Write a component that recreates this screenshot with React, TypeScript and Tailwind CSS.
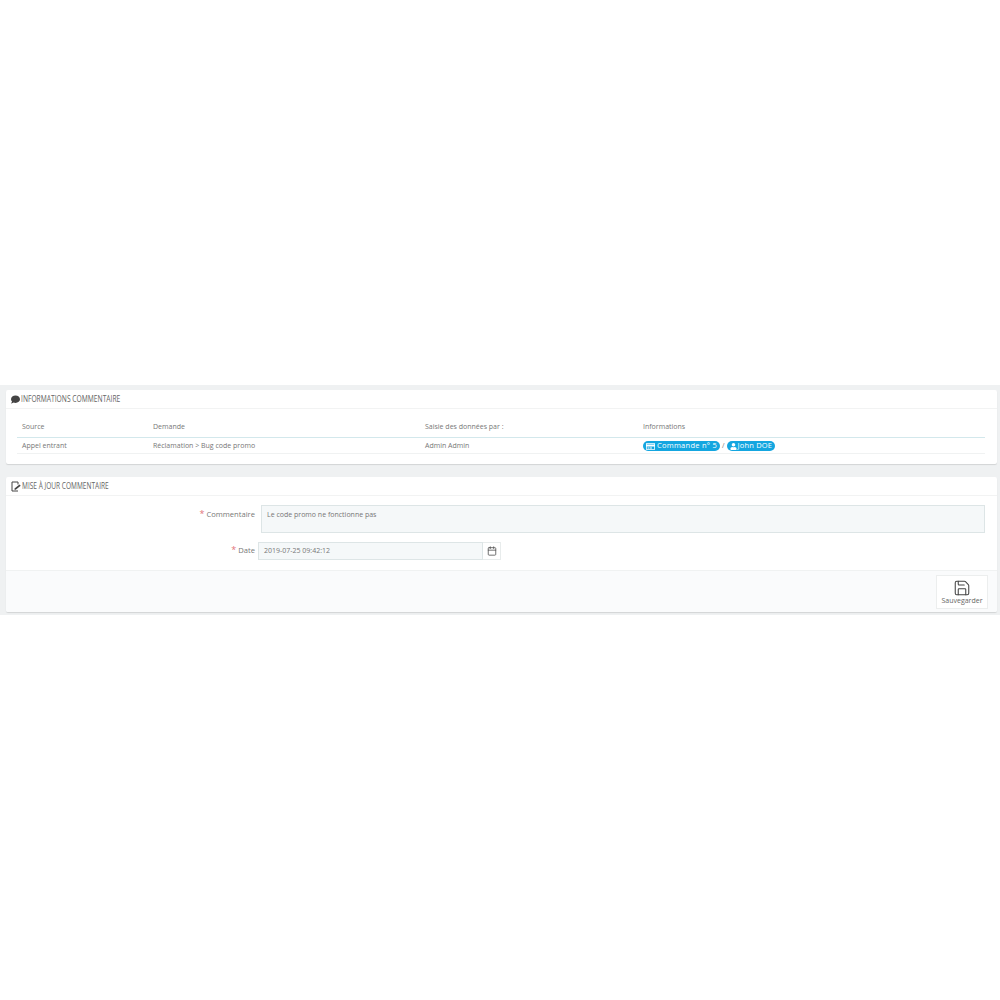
import { Calendar, Save } from "lucide-react";
import { FaComment, FaUser, FaRegCreditCard } from "react-icons/fa";

const columns = [
  { label: "Source", value: "Appel entrant", width: "w-[131px]" },
  { label: "Demande", value: "Réclamation > Bug code promo", width: "w-[272px]" },
  { label: "Saisie des données par :", value: "Admin Admin", width: "w-[218px]" },
];

function EditIcon() {
  return (
    <svg width="10" height="11" viewBox="0 0 10 11" fill="none" className="text-[#444]">
      <path d="M7 3.5V1H1v9h6" stroke="currentColor" strokeWidth="1" />
      <path d="M3.5 7.5l5-4 1.2 1.2-5 4h-1.2z" fill="currentColor" />
    </svg>
  );
}

export default function App() {
  return (
    <div className="h-[1000px] bg-white pt-[385px] font-['Open_Sans',sans-serif] text-[7px] text-[#777]">
      <div className="flex h-[230px] flex-col bg-[#eff1f2] pl-[6px] pr-[3px] pt-[5px]">
        {/* Informations */}
        <section className="h-[74px] rounded-[2px] bg-white shadow-[0_1px_1px_rgba(0,0,0,0.12)]">
          <h3 className="flex h-[19px] items-center gap-[1px] border-b border-[#f2f3f3] pl-[5px] text-[8.5px] text-[#666]">
            <FaComment size={9} className="text-[#444]" />
            <span className="origin-left scale-x-[0.79] whitespace-nowrap">INFORMATIONS COMMENTAIRE</span>
          </h3>
          <div className="ml-[11px] mr-[12px] mt-[10px]">
            <div className="flex h-[19px] items-center border-b border-[#d3e8ec] pb-[1px] pl-[5px]">
              {columns.map((c) => (
                <span key={c.label} className={c.width}>
                  {c.label}
                </span>
              ))}
              <span>Informations</span>
            </div>
            <div className="flex h-[16px] items-center border-b border-[#f0f2f2] pl-[5px] pt-[1px]">
              {columns.map((c) => (
                <span key={c.label} className={c.width}>
                  {c.value}
                </span>
              ))}
              <span className="flex items-center gap-[2px]">
                <span className="flex h-[10px] items-center gap-[2px] rounded-full bg-[#14a6e0] px-[3px] text-[7.5px] text-white">
                  <FaRegCreditCard size={9} />
                  <span className="tracking-[0.25px]">Commande n° 5</span>
                </span>
                /
                <span className="flex h-[10px] items-center gap-[1px] rounded-full bg-[#14a6e0] px-[3px] text-[7.5px] text-white">
                  <FaUser size={7} />
                  <span className="tracking-[0.2px]">John DOE</span>
                </span>
              </span>
            </div>
          </div>
        </section>

        {/* Mise a jour */}
        <section className="mt-[13px] flex h-[135px] flex-col rounded-[2px] bg-white shadow-[0_1px_1px_rgba(0,0,0,0.12)]">
          <h3 className="flex h-[19px] items-center gap-[1px] border-b border-[#f2f3f3] pl-[5px] text-[8.5px] text-[#666]">
            <EditIcon />
            <span className="origin-left scale-x-[0.77] whitespace-nowrap">MISE À JOUR COMMENTAIRE</span>
          </h3>
          <div className="flex h-[74px] flex-col pt-[9px]">
            <div className="flex">
              <label className="mt-[4px] w-[249px] text-right text-[7.6px]">
                <span className="text-[9px] leading-none text-[#e2727a]">*</span> Commentaire
              </label>
              <div className="ml-[6px] h-[28px] w-[724px] border border-[#dde5e6] bg-[#f5f8f9] pl-[5px] pt-[4px]">
                Le code promo ne fonctionne pas
              </div>
            </div>
            <div className="mt-[9px] flex">
              <label className="mt-[3px] w-[249px] text-right text-[7.6px]">
                <span className="text-[9px] leading-none text-[#e2727a]">*</span> Date
              </label>
              <div className="ml-[3px] flex h-[18px]">
                <div className="flex w-[225px] items-center border border-[#dde5e6] bg-[#f5f8f9] pl-[5px]">
                  2019-07-25 09:42:12
                </div>
                <div className="flex w-[18px] items-center justify-center border border-l-0 border-[#e8ecec] text-[#555]">
                  <Calendar size={10} strokeWidth={2} />
                </div>
              </div>
            </div>
          </div>
          <div className="flex flex-1 justify-end rounded-b-[2px] border-t border-[#f0f2f2] bg-[#fafbfc] pr-[9px] pt-[4px]">
            <button className="flex h-[34px] w-[52px] flex-col items-center border border-[#eceeee] bg-white pt-[3px] text-[7px] text-[#666]">
              <Save size={18} strokeWidth={1.4} className="text-[#444]" />
              <span className="-mt-[1px]">Sauvegarder</span>
            </button>
          </div>
        </section>
      </div>
    </div>
  );
}
